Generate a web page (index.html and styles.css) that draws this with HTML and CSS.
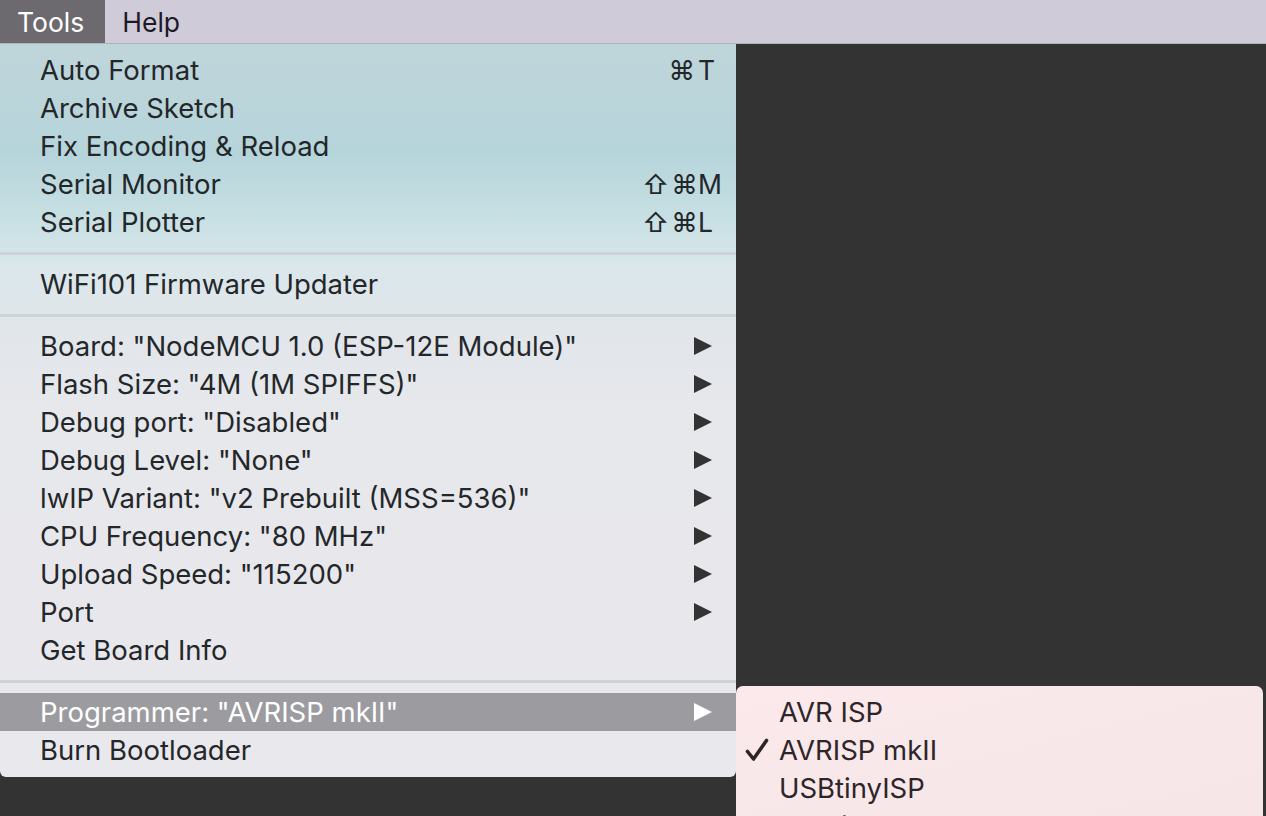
FILE: index.html
```html
<!DOCTYPE html>
<html>
<head>
<meta charset="utf-8">
<link rel="stylesheet" href="styles.css">
</head>
<body>
<div class="menubar">
  <div class="mb-item active">Tools</div>
  <div class="mb-item">Help</div>
</div>
<div class="stage">
  <div class="menu">
    <div class="row"><span class="label">Auto Format</span><span class="sc"><span class="mods">⌘</span><span class="key">T</span></span></div>
    <div class="row"><span class="label">Archive Sketch</span></div>
    <div class="row"><span class="label">Fix Encoding &amp; Reload</span></div>
    <div class="row"><span class="label">Serial Monitor</span><span class="sc"><span class="mods">⇧⌘</span><span class="key">M</span></span></div>
    <div class="row"><span class="label">Serial Plotter</span><span class="sc"><span class="mods">⇧⌘</span><span class="key">L</span></span></div>
    <div class="sep"></div>
    <div class="row"><span class="label">WiFi101 Firmware Updater</span></div>
    <div class="sep"></div>
    <div class="row"><span class="label">Board: "NodeMCU 1.0 (ESP-12E Module)"</span><span class="arrow"></span></div>
    <div class="row"><span class="label">Flash Size: "4M (1M SPIFFS)"</span><span class="arrow"></span></div>
    <div class="row"><span class="label">Debug port: "Disabled"</span><span class="arrow"></span></div>
    <div class="row"><span class="label">Debug Level: "None"</span><span class="arrow"></span></div>
    <div class="row"><span class="label">lwIP Variant: "v2 Prebuilt (MSS=536)"</span><span class="arrow"></span></div>
    <div class="row"><span class="label">CPU Frequency: "80 MHz"</span><span class="arrow"></span></div>
    <div class="row"><span class="label">Upload Speed: "115200"</span><span class="arrow"></span></div>
    <div class="row"><span class="label">Port</span><span class="arrow"></span></div>
    <div class="row"><span class="label">Get Board Info</span></div>
    <div class="sep"></div>
    <div class="row selected"><span class="label">Programmer: "AVRISP mkII"</span><span class="arrow"></span></div>
    <div class="row"><span class="label">Burn Bootloader</span></div>
  </div>
  <div class="submenu">
    <div class="subrow"><span class="check"></span><span>AVR ISP</span></div>
    <div class="subrow"><span class="check"><svg width="24" height="24" viewBox="0 0 24 24"><path d="M2.5 13.5 L8.5 21 L21.5 2.5" fill="none" stroke="#2d2528" stroke-width="3.6" stroke-linecap="round" stroke-linejoin="round"/></svg></span><span>AVRISP mkII</span></div>
    <div class="subrow"><span class="check"></span><span>USBtinyISP</span></div>
    <div class="subrow"><span class="check"></span><span>ArduinoISP</span></div>
  </div>
</div>
</body>
</html>
```
FILE: styles.css
```css
html, body {
  margin: 0;
  padding: 0;
  height: 100%;
  overflow: hidden;
}
body {
  background: #333333;
  font-family: Inter, "Liberation Sans", sans-serif;
  font-size: 27.5px;
  color: #23272a;
}
.menubar {
  height: 43px;
  background: #cfcbd9;
  border-bottom: 1px solid #a9b3b9;
  display: flex;
  align-items: stretch;
  font-size: 26.5px;
}
.mb-item {
  display: flex;
  align-items: center;
  padding: 0 19px 0 17px;
  color: #1d1926;
}
.mb-item.active {
  background: #6c6a6f;
  color: #ffffff;
  padding-right: 21px;
}
.stage {
  position: relative;
}
.menu {
  width: 736px;
  box-sizing: border-box;
  padding: 7px 0 8px;
  background: linear-gradient(to bottom, #bfd5da 0px, #b6d5db 110px, #c6dfe3 170px, #dbe7eb 225px, #e1e6ea 280px, #e7e8ec 380px, #e9e8ec 100%);
  border-radius: 0 0 6px 6px;
}
.row {
  height: 38px;
  display: flex;
  align-items: center;
  padding-left: 40px;
  position: relative;
}
.row.selected {
  background: #9c9ba0;
  color: #ffffff;
}
.label {
  white-space: nowrap;
}
.sc {
  position: absolute;
  left: 642px;
  display: flex;
  font-size: 26.5px;
}
.mods {
  width: 55px;
  text-align: right;
  letter-spacing: 2px;
}
.key {
  margin-left: 1px;
}
.arrow {
  position: absolute;
  left: 694px;
  top: 10px;
  width: 0;
  height: 0;
  border-top: 9px solid transparent;
  border-bottom: 9px solid transparent;
  border-left: 18px solid #333333;
}
.row.selected .arrow {
  border-left-color: #ffffff;
}
.sep {
  height: 24px;
  display: flex;
  align-items: center;
}
.sep::before {
  content: "";
  display: block;
  width: 100%;
  height: 3px;
  background: #ced3d7;
}
.submenu {
  position: absolute;
  left: 736px;
  top: 642px;
  width: 527px;
  height: 130px;
  box-sizing: border-box;
  padding-top: 7px;
  background: linear-gradient(to bottom right, #fbe9eb, #f6e6e8);
  border-radius: 7px 7px 0 0;
  color: #2d2528;
  overflow: hidden;
}
.subrow {
  height: 38px;
  display: flex;
  align-items: center;
}
.check {
  width: 43px;
  padding-left: 9px;
  box-sizing: border-box;
  display: flex;
  align-items: center;
}
```
